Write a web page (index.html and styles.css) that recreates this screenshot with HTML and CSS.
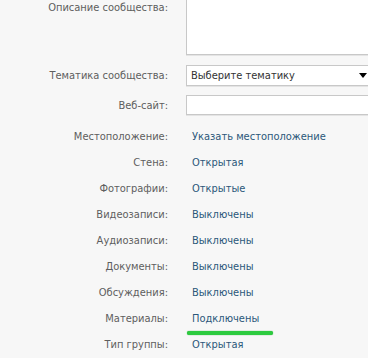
FILE: index.html
```html
<!DOCTYPE html>
<html lang="ru">
<head>
<meta charset="utf-8">
<link rel="stylesheet" href="styles.css">
</head>
<body>
<div class="form">
  <div class="row row-top">
    <div class="label">Описание сообщества:</div>
    <div class="field"><div class="textarea"></div></div>
  </div>
  <div class="row row-select">
    <div class="label">Тематика сообщества:</div>
    <div class="field"><div class="select"><span>Выберите тематику</span><span class="arrow"></span></div></div>
  </div>
  <div class="row row-input">
    <div class="label">Веб-сайт:</div>
    <div class="field"><div class="input"></div></div>
  </div>
  <div class="row row-text first">
    <div class="label">Местоположение:</div>
    <div class="value">Указать местоположение</div>
  </div>
  <div class="row row-text">
    <div class="label">Стена:</div>
    <div class="value">Открытая</div>
  </div>
  <div class="row row-text">
    <div class="label">Фотографии:</div>
    <div class="value">Открытые</div>
  </div>
  <div class="row row-text">
    <div class="label">Видеозаписи:</div>
    <div class="value">Выключены</div>
  </div>
  <div class="row row-text">
    <div class="label">Аудиозаписи:</div>
    <div class="value">Выключены</div>
  </div>
  <div class="row row-text">
    <div class="label">Документы:</div>
    <div class="value">Выключены</div>
  </div>
  <div class="row row-text">
    <div class="label">Обсуждения:</div>
    <div class="value">Выключены</div>
  </div>
  <div class="row row-text">
    <div class="label">Материалы:</div>
    <div class="value marked">Подключены</div>
  </div>
  <div class="row row-text">
    <div class="label">Тип группы:</div>
    <div class="value">Открытая</div>
  </div>
</div>
</body>
</html>
```

FILE: styles.css
```css
html, body {
  margin: 0;
  padding: 0;
  background: #f7f7f7;
  overflow: hidden;
}
body {
  width: 368px;
  height: 358px;
  font-family: "DejaVu Sans Condensed", "DejaVu Sans", Tahoma, sans-serif;
  font-stretch: condensed;
  font-size: 11px;
  color: #5e5e5e;
}
.form {
  display: flex;
  flex-direction: column;
}
.row {
  display: flex;
  align-items: center;
}
.label {
  width: 168px;
  flex: none;
  text-align: right;
  color: #5e5e5e;
}
.field {
  margin-left: 18px;
  flex: none;
}
.value {
  margin-left: 24px;
  color: #2b587a;
  position: relative;
}
.row-top {
  align-items: flex-start;
}
.row-top .label {
  line-height: 16px;
}
.textarea {
  width: 192px;
  height: 62px;
  margin-top: -9px;
  background: #fff;
  border: 1px solid #c8c8c8;
  box-shadow: 0 1px 0 #e4e4e4;
}
.row-select {
  margin-top: 10px;
}
.select {
  width: 188px;
  height: 19px;
  background: #fff;
  border: 1px solid #c8c8c8;
  box-shadow: 0 1px 0 #e4e4e4;
  display: flex;
  align-items: center;
  justify-content: space-between;
  padding-left: 4px;
  color: #333;
}
.arrow {
  width: 0;
  height: 0;
  border-left: 4px solid transparent;
  border-right: 4px solid transparent;
  border-top: 5px solid #000;
  margin-right: 12px;
}
.row-input {
  margin-top: 9px;
}
.input {
  width: 192px;
  height: 18px;
  background: #fff;
  border: 1px solid #c8c8c8;
  box-shadow: 0 1px 0 #e4e4e4;
}
.row-text {
  height: 26px;
}
.row-text.first {
  margin-top: 8px;
}
.marked::after {
  content: "";
  position: absolute;
  left: -5px;
  top: 19px;
  width: 86px;
  height: 4px;
  border-radius: 3px;
  background: #2dcb3f;
  box-shadow: 0 0 1px #1e9a2e;
}
```
